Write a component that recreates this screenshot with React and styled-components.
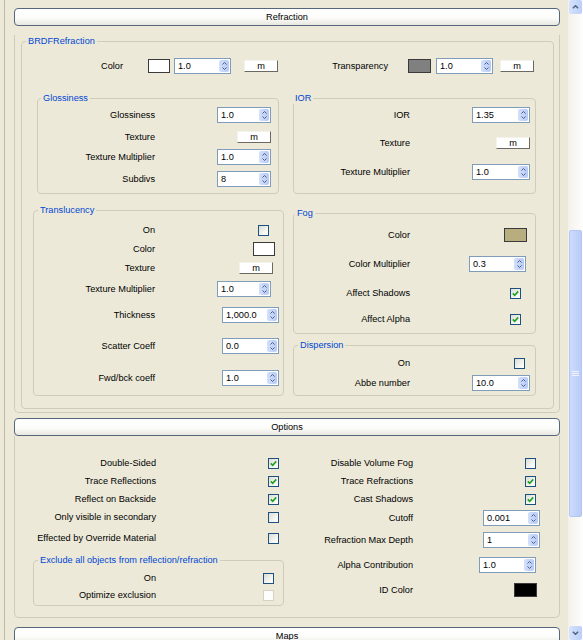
import React from 'react';
import styled, { createGlobalStyle } from 'styled-components';

const GlobalStyle = createGlobalStyle`
  html, body {
    margin: 0;
    padding: 0;
    height: 100%;
    overflow: hidden;
    background: #ece9d8;
  }
  body {
    font-family: "Liberation Sans", Arial, sans-serif;
    font-size: 9.2px;
    color: #000;
  }
`;

const px = (v) => (v === 'auto' ? 'auto' : `${v || 0}px`);

const Window = styled.div`
  display: flex;
  width: 583px;
  height: 640px;
  overflow: hidden;
  background: #ece9d8;
`;

const Rollup = styled.div`
  box-sizing: border-box;
  width: 564px;
  margin-left: 4px;
  padding-left: 9px;
  border-left: 1px solid #bdb9a6;
`;

const Rollout = styled.section`
  width: 546px;
  margin-top: ${(p) => p.$mt}px;
`;

const RollHeader = styled.div`
  box-sizing: border-box;
  height: 18px;
  border: 1px solid #56677d;
  border-radius: 4px;
  background: linear-gradient(#ffffff 0%, #fcfcfa 55%, #e8e7e0 100%);
  display: flex;
  align-items: center;
  justify-content: center;
`;

const RollBody = styled.div`
  border: 1px solid #cfcbbb;
  border-top: none;
  border-radius: 0 0 5px 5px;
  padding: ${(p) => p.$pad};
`;

const Group = styled.fieldset`
  margin: ${(p) => p.$m || '0'};
  padding: 0 0 ${(p) => p.$pb}px 0;
  border: 1px solid #d0ccbc;
  border-radius: 4px;
  min-width: 0;
`;

const Legend = styled.legend`
  margin-left: ${(p) => p.$ml}px;
  padding: 0 2px;
  color: #0046d5;
  font-size: 9.2px;
  line-height: 12px;
`;

const BrdfGrid = styled.div`
  display: grid;
  grid-template-columns: 251px 243px;
  column-gap: 9px;
  align-items: start;
  padding: 0 17px 0 11px;
`;

const Stack = styled.div`
  display: flex;
  flex-direction: column;
  padding-top: ${(p) => p.$pt || 0}px;
`;

const OptGrid = styled.div`
  display: grid;
  grid-template-columns: 274px 270px;
  align-items: start;
`;

const Row = styled.div`
  display: flex;
  align-items: center;
  height: 16px;
  margin-top: ${(p) => p.$mt || 0}px;
  padding-right: ${(p) => p.$pr || 0}px;
`;

const Label = styled.span`
  flex: none;
  width: ${(p) => p.$w}px;
  text-align: right;
  white-space: nowrap;
  line-height: 16px;
`;

const SpinBox = styled.div`
  box-sizing: border-box;
  flex: none;
  width: ${(p) => p.$w}px;
  height: 16px;
  margin-left: ${(p) => px(p.$ml)};
  border: 1px solid #7f9db9;
  background: #fff;
  display: flex;
  align-items: center;
`;

const SpinValue = styled.span`
  flex: 1;
  padding-left: 3px;
  line-height: 14px;
`;

const SpinArrows = styled.div`
  width: 10px;
  height: 12px;
  margin-right: 1px;
  border-radius: 2px;
  background: linear-gradient(90deg, #d3e0fc, #b7caf5);
  display: flex;
  flex-direction: column;
  align-items: center;
  justify-content: center;
  gap: 2px;
`;

const MapBtn = styled.div`
  box-sizing: border-box;
  flex: none;
  width: 34px;
  height: 12px;
  margin-left: ${(p) => px(p.$ml)};
  background: #fff;
  border: 1px solid;
  border-color: #f3f2ec #6c6a60 #6c6a60 #f3f2ec;
  display: flex;
  align-items: center;
  justify-content: center;
  line-height: 10px;
`;

const Swatch = styled.div`
  box-sizing: border-box;
  flex: none;
  width: ${(p) => p.$w || 22}px;
  height: 14px;
  margin-left: ${(p) => px(p.$ml)};
  background: ${(p) => p.$c};
  border: 1px solid #3a3a3a;
`;

const Box = styled.div`
  box-sizing: border-box;
  flex: none;
  width: 11px;
  height: 11px;
  margin-left: auto;
  border: 1px solid ${(p) => (p.$disabled ? '#d4d2c6' : '#1c5180')};
  background: ${(p) =>
    p.$disabled ? '#fdfdfb' : 'linear-gradient(135deg, #dcdcd5 0%, #f4f4f0 60%, #ffffff 100%)'};
  display: flex;
  align-items: center;
  justify-content: center;
`;

const ScrollBar = styled.div`
  width: 15px;
  display: flex;
  flex-direction: column;
  background: linear-gradient(90deg, #f3f1ea, #fefefd);
`;

const ScrollBtn = styled.div`
  height: 14px;
  margin: 0 1px;
  border-radius: 2px;
  background: linear-gradient(90deg, #d6e2fd, #bccff8);
  display: flex;
  align-items: center;
  justify-content: center;
`;

const Track = styled.div`
  flex: 1;
  display: flex;
  flex-direction: column;
`;

const Thumb = styled.div`
  box-sizing: border-box;
  height: 287px;
  margin: 216px 1px 0 1px;
  border: 1px solid #b3c6f3;
  border-radius: 2px;
  background: linear-gradient(90deg, #cddbfd, #b9ccf8);
  display: flex;
  align-items: center;
  justify-content: center;
`;

const Chevron = ({ down, color = '#4d6185', w = 5, h = 3 }) => (
  <svg width={w} height={h} viewBox="0 0 5 3">
    <path
      d={down ? 'M0.5 0.5 L2.5 2.5 L4.5 0.5' : 'M0.5 2.5 L2.5 0.5 L4.5 2.5'}
      fill="none"
      stroke={color}
      strokeWidth="1"
    />
  </svg>
);

const Spin = ({ v, w, ml = 'auto' }) => (
  <SpinBox $w={w} $ml={ml}>
    <SpinValue>{v}</SpinValue>
    <SpinArrows>
      <Chevron />
      <Chevron down />
    </SpinArrows>
  </SpinBox>
);

const Check = ({ on, disabled }) => (
  <Box $disabled={disabled}>
    {on && (
      <svg width="7" height="7" viewBox="0 0 7 7">
        <path d="M0.8 3.4 L2.7 5.3 L6.2 1.4" fill="none" stroke="#21a121" strokeWidth="1.6" />
      </svg>
    )}
  </Box>
);

const App = () => {
  return (
    <Window>
      <GlobalStyle />
      <Rollup>
        <Rollout $mt={8}>
          <RollHeader>Refraction</RollHeader>
          <RollBody $pad="0 0 3px 0">
            <Group $m="9px 5px 0 6px" $pb={12}>
              <Legend $ml={4}>BRDFRefraction</Legend>
              <BrdfGrid>
                <Row $mt={11}>
                  <Label $w={90}>Color</Label>
                  <Swatch $c="#ffffff" $ml={25} />
                  <Spin v="1.0" w={57} ml={4} />
                  <MapBtn $ml={13}>m</MapBtn>
                </Row>
                <Row $mt={11}>
                  <Label $w={95}>Transparency</Label>
                  <Swatch $c="#808080" $w={23} $ml={20} />
                  <Spin v="1.0" w={57} ml={5} />
                  <MapBtn $ml={7}>m</MapBtn>
                </Row>

                <Group $m="18px 5px 0 4px" $pb={6}>
                  <Legend $ml={3}>Glossiness</Legend>
                  <Row $mt={3} $pr={7}>
                    <Label $w={117}>Glossiness</Label>
                    <Spin v="1.0" w={54} />
                  </Row>
                  <Row $mt={6} $pr={7}>
                    <Label $w={117}>Texture</Label>
                    <MapBtn $ml="auto">m</MapBtn>
                  </Row>
                  <Row $mt={4} $pr={7}>
                    <Label $w={117}>Texture Multiplier</Label>
                    <Spin v="1.0" w={54} />
                  </Row>
                  <Row $mt={6} $pr={7}>
                    <Label $w={117}>Subdivs</Label>
                    <Spin v="8" w={54} />
                  </Row>
                </Group>

                <Group $m="18px 0 0 0" $pb={13}>
                  <Legend $ml={-1}>IOR</Legend>
                  <Row $mt={3} $pr={5}>
                    <Label $w={116}>IOR</Label>
                    <Spin v="1.35" w={58} />
                  </Row>
                  <Row $mt={12} $pr={5}>
                    <Label $w={116}>Texture</Label>
                    <MapBtn $ml="auto">m</MapBtn>
                  </Row>
                  <Row $mt={13} $pr={5}>
                    <Label $w={116}>Texture Multiplier</Label>
                    <Spin v="1.0" w={58} />
                  </Row>
                </Group>

                <Group $m="10px 0 0 0" $pb={9}>
                  <Legend $ml={4}>Translucency</Legend>
                  <Row $mt={6} $pr={14}>
                    <Label $w={121}>On</Label>
                    <Check />
                  </Row>
                  <Row $mt={3} $pr={8}>
                    <Label $w={121}>Color</Label>
                    <Swatch $c="#ffffff" $ml="auto" />
                  </Row>
                  <Row $mt={3} $pr={10}>
                    <Label $w={121}>Texture</Label>
                    <MapBtn $ml="auto">m</MapBtn>
                  </Row>
                  <Row $mt={5} $pr={12}>
                    <Label $w={121}>Texture Multiplier</Label>
                    <Spin v="1.0" w={54} />
                  </Row>
                  <Row $mt={10} $pr={4}>
                    <Label $w={121}>Thickness</Label>
                    <Spin v="1,000.0" w={57} />
                  </Row>
                  <Row $mt={15} $pr={4}>
                    <Label $w={121}>Scatter Coeff</Label>
                    <Spin v="0.0" w={57} />
                  </Row>
                  <Row $mt={16} $pr={4}>
                    <Label $w={121}>Fwd/bck coeff</Label>
                    <Spin v="1.0" w={57} />
                  </Row>
                </Group>

                <Stack $pt={13}>
                  <Group $pb={6}>
                    <Legend $ml={1}>Fog</Legend>
                    <Row $mt={8} $pr={8}>
                      <Label $w={116}>Color</Label>
                      <Swatch $c="#b8ad7f" $w={23} $ml="auto" />
                    </Row>
                    <Row $mt={13} $pr={9}>
                      <Label $w={116}>Color Multiplier</Label>
                      <Spin v="0.3" w={57} />
                    </Row>
                    <Row $mt={13} $pr={14}>
                      <Label $w={116}>Affect Shadows</Label>
                      <Check on />
                    </Row>
                    <Row $mt={10} $pr={14}>
                      <Label $w={116}>Affect Alpha</Label>
                      <Check on />
                    </Row>
                  </Group>
                  <Group $m="5px 0 0 0" $pb={4}>
                    <Legend $ml={4}>Dispersion</Legend>
                    <Row $mt={4} $pr={10}>
                      <Label $w={116}>On</Label>
                      <Check />
                    </Row>
                    <Row $mt={4} $pr={5}>
                      <Label $w={116}>Abbe number</Label>
                      <Spin v="10.0" w={58} />
                    </Row>
                  </Group>
                </Stack>
              </BrdfGrid>
            </Group>
          </RollBody>
        </Rollout>

        <Rollout $mt={5}>
          <RollHeader>Options</RollHeader>
          <RollBody $pad="0 0 11px 0">
            <OptGrid>
              <Stack>
                <Row $mt={19} $pr={10}>
                  <Label $w={141}>Double-Sided</Label>
                  <Check on />
                </Row>
                <Row $mt={2} $pr={10}>
                  <Label $w={141}>Trace Reflections</Label>
                  <Check on />
                </Row>
                <Row $mt={2} $pr={10}>
                  <Label $w={141}>Reflect on Backside</Label>
                  <Check on />
                </Row>
                <Row $mt={2} $pr={10}>
                  <Label $w={141}>Only visible in secondary</Label>
                  <Check />
                </Row>
                <Row $mt={5} $pr={10}>
                  <Label $w={141}>Effected by Override Material</Label>
                  <Check />
                </Row>
                <Group $m="8px 5px 0 18px" $pb={2}>
                  <Legend $ml={4}>Exclude all objects from reflection/refraction</Legend>
                  <Row $mt={4} $pr={9}>
                    <Label $w={122}>On</Label>
                    <Check />
                  </Row>
                  <Row $mt={1} $pr={9}>
                    <Label $w={122}>Optimize exclusion</Label>
                    <Check disabled />
                  </Row>
                </Group>
              </Stack>
              <Stack>
                <Row $mt={19} $pr={23}>
                  <Label $w={124}>Disable Volume Fog</Label>
                  <Check />
                </Row>
                <Row $mt={2} $pr={23}>
                  <Label $w={124}>Trace Refractions</Label>
                  <Check on />
                </Row>
                <Row $mt={2} $pr={23}>
                  <Label $w={124}>Cast Shadows</Label>
                  <Check on />
                </Row>
                <Row $mt={3} $pr={19}>
                  <Label $w={124}>Cutoff</Label>
                  <Spin v="0.001" w={57} />
                </Row>
                <Row $mt={6} $pr={19}>
                  <Label $w={124}>Refraction Max Depth</Label>
                  <Spin v="1" w={57} />
                </Row>
                <Row $mt={9} $pr={23}>
                  <Label $w={124}>Alpha Contribution</Label>
                  <Spin v="1.0" w={57} />
                </Row>
                <Row $mt={9} $pr={22}>
                  <Label $w={124}>ID Color</Label>
                  <Swatch $c="#000000" $w={23} $ml="auto" />
                </Row>
              </Stack>
            </OptGrid>
          </RollBody>
        </Rollout>

        <Rollout $mt={9}>
          <RollHeader>Maps</RollHeader>
        </Rollout>
      </Rollup>

      <ScrollBar>
        <ScrollBtn>
          <Chevron color="#4d6185" w={7} h={4} />
        </ScrollBtn>
        <Track>
          <Thumb>
            <svg width="7" height="7" viewBox="0 0 7 7">
              <path d="M0 1.5 H7 M0 3.5 H7 M0 5.5 H7" stroke="#eef3ff" strokeWidth="1" />
            </svg>
          </Thumb>
        </Track>
        <ScrollBtn>
          <Chevron down color="#4d6185" w={7} h={4} />
        </ScrollBtn>
      </ScrollBar>
    </Window>
  );
};

export default App;
